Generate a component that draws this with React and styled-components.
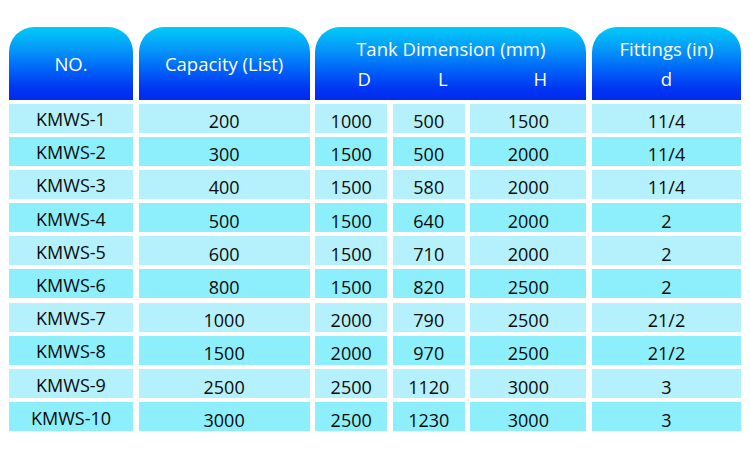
import React from "react";
import styled, { createGlobalStyle } from "styled-components";

const GlobalStyle = createGlobalStyle`
  html, body {
    margin: 0;
    padding: 0;
    background: #ffffff;
  }
  body {
    font-family: "Open Sans", "Liberation Sans", sans-serif;
  }
`;

const Page = styled.div`
  width: 750px;
  height: 458px;
  box-sizing: border-box;
  padding: 27px 0 0 9px;
  background: #ffffff;
`;

const Table = styled.div`
  display: grid;
  grid-template-columns: 124px 171px 72px 72px 116px 149px;
  column-gap: 5.6px;
  row-gap: 4.2px;
`;

const Head = styled.div`
  grid-column: ${(p) => p.$span || "auto"};
  height: 73px;
  margin-bottom: -0.7px;
  border-radius: 25px 25px 0 0;
  background: linear-gradient(
    to bottom,
    #00cbf8 0%,
    #0599f8 30%,
    #0064f8 58%,
    #0034f2 85%,
    #002af0 100%
  );
  color: #ffffff;
  font-size: 18.5px;
  display: flex;
  flex-direction: column;
  align-items: center;
  justify-content: center;
  box-sizing: border-box;
`;

const HeadTitle = styled.div`
  line-height: 30px;
`;

const SubLabels = styled.div`
  align-self: stretch;
  display: grid;
  grid-template-columns: ${(p) => p.$cols};
  column-gap: 5.6px;
  line-height: 30px;
`;

const SubLabel = styled.span`
  text-align: center;
  padding-left: ${(p) => p.$shift || 0}px;
`;

const Cell = styled.div`
  height: 29px;
  background: ${(p) => (p.$alt ? "#8eeffc" : "#b5f1fc")};
  color: #0a0a0a;
  font-size: 18px;
  display: flex;
  align-items: center;
  justify-content: center;
  padding-top: ${(p) => (p.$first ? 2 : 6)}px;
  box-sizing: border-box;
`;

const rows = [
  ["KMWS-1", "200", "1000", "500", "1500", "11/4"],
  ["KMWS-2", "300", "1500", "500", "2000", "11/4"],
  ["KMWS-3", "400", "1500", "580", "2000", "11/4"],
  ["KMWS-4", "500", "1500", "640", "2000", "2"],
  ["KMWS-5", "600", "1500", "710", "2000", "2"],
  ["KMWS-6", "800", "1500", "820", "2500", "2"],
  ["KMWS-7", "1000", "2000", "790", "2500", "21/2"],
  ["KMWS-8", "1500", "2000", "970", "2500", "21/2"],
  ["KMWS-9", "2500", "2500", "1120", "3000", "3"],
  ["KMWS-10", "3000", "2500", "1230", "3000", "3"],
];

function App() {
  return (
    <>
      <GlobalStyle />
      <Page>
        <Table>
          <Head>NO.</Head>
          <Head>Capacity (List)</Head>
          <Head $span="span 3">
            <HeadTitle>Tank Dimension (mm)</HeadTitle>
            <SubLabels $cols="72px 72px 116px">
              <SubLabel $shift={26}>D</SubLabel>
              <SubLabel $shift={28}>L</SubLabel>
              <SubLabel $shift={24}>H</SubLabel>
            </SubLabels>
          </Head>
          <Head>
            <HeadTitle>Fittings (in)</HeadTitle>
            <SubLabels $cols="1fr">
              <SubLabel>d</SubLabel>
            </SubLabels>
          </Head>
          {rows.map((row, i) =>
            row.map((val, j) => (
              <Cell key={`${i}-${j}`} $alt={i % 2 === 1} $first={j === 0}>
                {val}
              </Cell>
            ))
          )}
        </Table>
      </Page>
    </>
  );
}

export default App;
